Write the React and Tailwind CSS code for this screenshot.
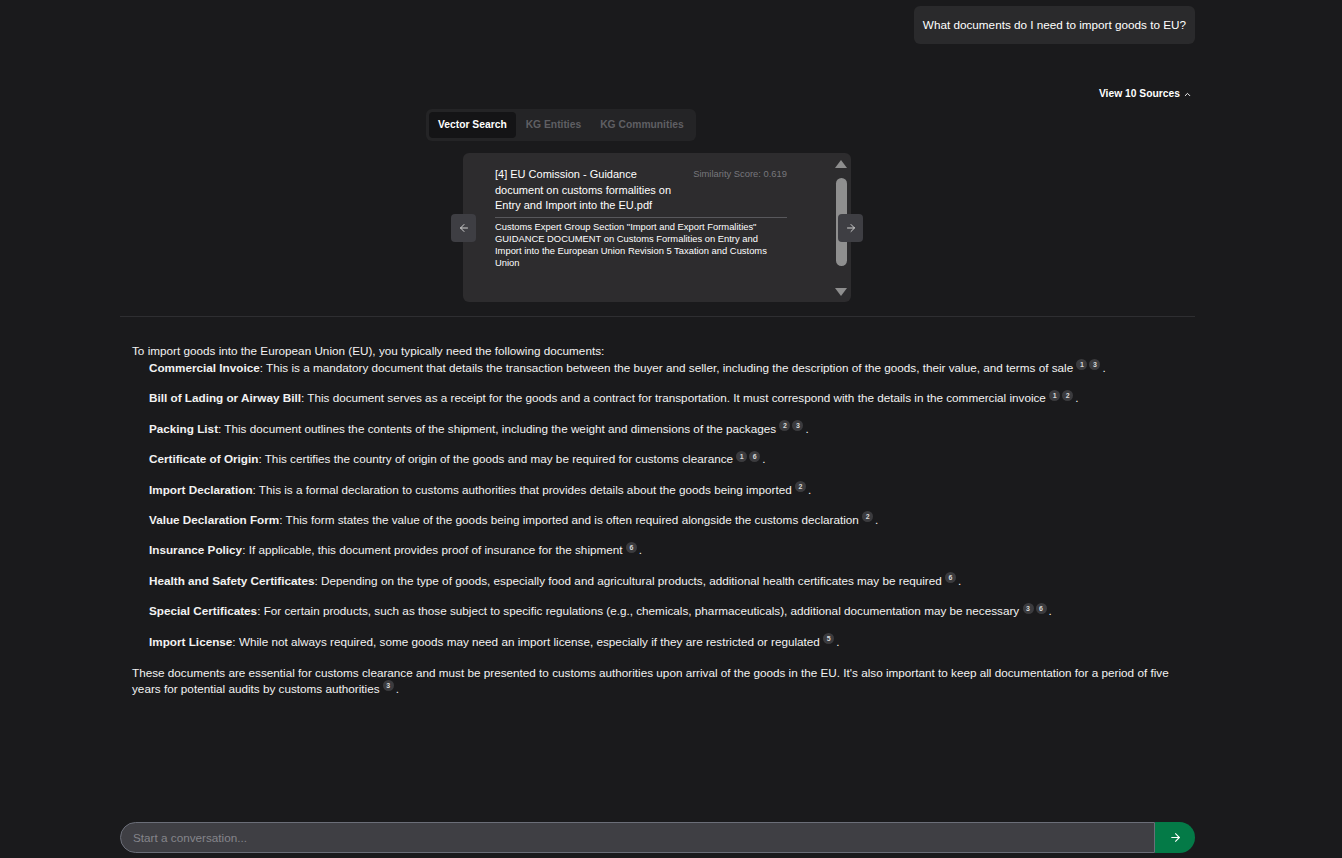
import React from "react";

const Badge = ({ n, first }) => (
  <span
    className={`relative -top-[4px] inline-flex h-[11px] w-[11px] items-center justify-center rounded-full bg-[#3b3b3e] align-middle text-[7px] font-bold leading-none text-[#d8d8d8] ${first ? "" : "ml-[2px]"}`}
  >
    {n}
  </span>
);

const Cites = ({ nums }) => (
  <>
    {" "}
    {nums.map((n, i) => (
      <Badge key={i} n={n} first={i === 0} />
    ))}
    <span className="ml-[2px]">.</span>
  </>
);

const items = [
  ["Commercial Invoice", "This is a mandatory document that details the transaction between the buyer and seller, including the description of the goods, their value, and terms of sale", [1, 3]],
  ["Bill of Lading or Airway Bill", "This document serves as a receipt for the goods and a contract for transportation. It must correspond with the details in the commercial invoice", [1, 2]],
  ["Packing List", "This document outlines the contents of the shipment, including the weight and dimensions of the packages", [2, 3]],
  ["Certificate of Origin", "This certifies the country of origin of the goods and may be required for customs clearance", [1, 6]],
  ["Import Declaration", "This is a formal declaration to customs authorities that provides details about the goods being imported", [2]],
  ["Value Declaration Form", "This form states the value of the goods being imported and is often required alongside the customs declaration", [2]],
  ["Insurance Policy", "If applicable, this document provides proof of insurance for the shipment", [6]],
  ["Health and Safety Certificates", "Depending on the type of goods, especially food and agricultural products, additional health certificates may be required", [6]],
  ["Special Certificates", "For certain products, such as those subject to specific regulations (e.g., chemicals, pharmaceuticals), additional documentation may be necessary", [3, 6]],
  ["Import License", "While not always required, some goods may need an import license, especially if they are restricted or regulated", [5]],
];

const Arrow = ({ dir }) => (
  <svg width="12" height="12" viewBox="0 0 24 24" fill="none" stroke="currentColor" strokeWidth="2" strokeLinecap="round" strokeLinejoin="round">
    {dir === "left" ? (
      <>
        <path d="M19 12H5" />
        <path d="M12 19l-7-7 7-7" />
      </>
    ) : (
      <>
        <path d="M5 12h14" />
        <path d="M12 5l7 7-7 7" />
      </>
    )}
  </svg>
);

export default function App() {
  return (
    <div
      className="flex h-screen w-full flex-col bg-[#1a1a1c] text-[#f0f0f0]"
      style={{ fontFamily: '"Liberation Sans", Arial, sans-serif' }}
    >
      <div className="mx-[120px] mr-[147px] flex flex-1 flex-col">
        {/* user bubble */}
        <div className="mt-[6px] flex justify-end">
          <div className="rounded-[6px] bg-[#2a2a2c] px-[9px] py-[11px] text-[11.72px] leading-[16px] text-white">
            What documents do I need to import goods to EU?
          </div>
        </div>

        {/* view sources */}
        <div className="mt-[43px] flex justify-end pr-[3px]">
          <div className="flex items-center gap-[3px] text-[10.3px] font-bold leading-[14px] text-white">
            View 10 Sources
            <svg width="9" height="9" viewBox="0 0 24 24" fill="none" stroke="currentColor" strokeWidth="2.5" strokeLinecap="round" strokeLinejoin="round">
              <path d="M6 15l6-6 6 6" />
            </svg>
          </div>
        </div>

        {/* tabs */}
        <div className="ml-[306px] mt-[8px] flex w-fit rounded-[6px] bg-[#242426] p-[3px] text-[10.3px] leading-[14px]">
          <div className="rounded-[4px] bg-[#141416] px-[9px] py-[6px] font-bold text-white">Vector Search</div>
          <div className="px-[10px] py-[6px] font-bold text-[#5f5f63]">KG Entities</div>
          <div className="px-[9px] py-[6px] font-bold text-[#5f5f63]">KG Communities</div>
        </div>

        {/* source card */}
        <div className="ml-[331px] mt-[12px] flex w-[412px] items-center">
          <button className="relative z-10 flex h-[28px] w-[25px] items-center justify-center rounded-[4px] bg-[#3e3e43] text-[#d0d0d0]">
            <Arrow dir="left" />
          </button>
          <div className="-mx-[13px] flex h-[149px] w-[388px] rounded-[6px] bg-[#2d2c2e]">
            <div className="flex-1 pl-[32px] pr-[48px] pt-[14px]">
              <div className="flex items-start justify-between">
                <div className="w-[185px] text-[11px] font-medium leading-[15.5px] text-white">
                  [4] EU Comission - Guidance document on customs formalities on Entry and Import into the EU.pdf
                </div>
                <div className="pt-[1px] text-[9.4px] leading-[12px] text-[#77777c]">Similarity Score: 0.619</div>
              </div>
              <div className="mt-[3px] border-t border-[#58585c]" />
              <div className="mt-[3px] text-[9.4px] leading-[12.3px] text-white">
                Customs Expert Group Section "Import and Export Formalities" GUIDANCE DOCUMENT on Customs Formalities on Entry and Import into the European Union Revision 5 Taxation and Customs Union
              </div>
            </div>
            <div className="mr-[4px] flex w-[12px] flex-col items-center pt-[7px]">
              <div className="h-0 w-0 border-x-[6px] border-b-[8px] border-x-transparent border-b-[#8e8e8e]" />
              <div className="mt-[10px] h-[88px] w-[11px] rounded-full bg-[#8f8f8f]" />
              <div className="flex-1" />
              <div className="mb-[6px] h-0 w-0 border-x-[6px] border-t-[8px] border-x-transparent border-t-[#8e8e8e]" />
            </div>
          </div>
          <button className="relative z-10 flex h-[28px] w-[25px] items-center justify-center rounded-[4px] bg-[#3e3e43] text-[#d0d0d0]">
            <Arrow dir="right" />
          </button>
        </div>

        <div className="mt-[14px] border-t border-[#2e2e31]" />

        {/* answer */}
        <div className="px-[12px] pt-[26px] text-[11.72px] text-[#f2f2f2]">
          <p className="leading-[16px]">To import goods into the European Union (EU), you typically need the following documents:</p>
          <ul className="pl-[17px]">
            {items.map(([label, text, nums], i) => (
              <li key={i} className="mb-[12.4px] leading-[18px]">
                <span className="font-bold">{label}</span>: {text}
                <Cites nums={nums} />
              </li>
            ))}
          </ul>
          <p className="mt-[14.4px] pr-[12px] leading-[16px]">
            These documents are essential for customs clearance and must be presented to customs authorities upon arrival of the goods in the EU. It's also important to keep all documentation for a period of five years for potential audits by customs authorities
            <Cites nums={[3]} />
          </p>
        </div>
      </div>

      {/* input */}
      <div className="mb-[5px] ml-[120px] mr-[147px] flex h-[31px]">
        <div className="flex flex-1 items-center rounded-l-full border border-[#6b6e78] bg-[#3f3f44] pl-[12px] text-[11.72px] text-[#85858b]">
          Start a conversation...
        </div>
        <button className="flex w-[40px] items-center justify-center rounded-r-full bg-[#047a47] text-white">
          <svg width="13" height="13" viewBox="0 0 24 24" fill="none" stroke="currentColor" strokeWidth="2" strokeLinecap="round" strokeLinejoin="round">
            <path d="M5 12h14" />
            <path d="M12 5l7 7-7 7" />
          </svg>
        </button>
      </div>
    </div>
  );
}
